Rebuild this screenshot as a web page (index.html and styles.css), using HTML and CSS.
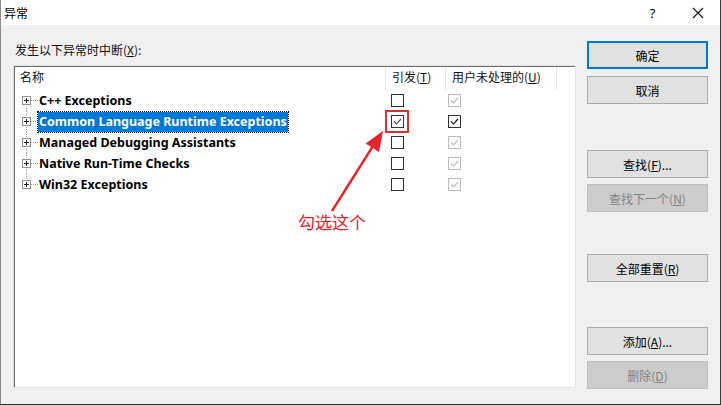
FILE: index.html
```html
<!DOCTYPE html>
<html lang="zh-CN">
<head>
<meta charset="utf-8">
<title>异常</title>
<link rel="stylesheet" href="styles.css">
</head>
<body>
<div class="window">
  <div class="titlebar">
    <span class="title">异常</span>
    <span class="tb-help">?</span>
    <span class="tb-close"><svg width="12" height="12" viewBox="0 0 12 12"><path d="M1 1L11 11M11 1L1 11" stroke="#111" stroke-width="1.1" fill="none"/></svg></span>
  </div>
  <div class="content">
    <div class="left">
      <div class="label">发生以下异常时中断(<u>X</u>):</div>
      <div class="listbox">
        <div class="header">
          <div class="hcol c-name">名称</div>
          <div class="hcol c-throw">引发(<u>T</u>)</div>
          <div class="hcol c-user">用户未处理的(<u>U</u>)</div>
        </div>
        <div class="row first">
          <div class="c-name cell"><span class="tree"><span class="exp"></span><span class="dash"></span></span><span class="name">C++ Exceptions</span></div>
          <div class="c-throw cell"><span class="cb"></span></div>
          <div class="c-user cell"><span class="cb dis"><svg viewBox="0 0 11 11"><path d="M2 5.5L4.5 8L9 3" /></svg></span></div>
        </div>
        <div class="row">
          <div class="c-name cell"><span class="tree"><span class="exp"></span><span class="dash"></span></span><span class="name sel">Common Language Runtime Exceptions</span></div>
          <div class="c-throw cell"><span class="cb on"><svg viewBox="0 0 11 11"><path d="M2 5.5L4.5 8L9 3" /></svg></span></div>
          <div class="c-user cell"><span class="cb on dark"><svg viewBox="0 0 11 11"><path d="M2 5.5L4.5 8L9 3" /></svg></span></div>
        </div>
        <div class="row">
          <div class="c-name cell"><span class="tree"><span class="exp"></span><span class="dash"></span></span><span class="name">Managed Debugging Assistants</span></div>
          <div class="c-throw cell"><span class="cb"></span></div>
          <div class="c-user cell"><span class="cb dis"><svg viewBox="0 0 11 11"><path d="M2 5.5L4.5 8L9 3" /></svg></span></div>
        </div>
        <div class="row">
          <div class="c-name cell"><span class="tree"><span class="exp"></span><span class="dash"></span></span><span class="name">Native Run-Time Checks</span></div>
          <div class="c-throw cell"><span class="cb"></span></div>
          <div class="c-user cell"><span class="cb dis"><svg viewBox="0 0 11 11"><path d="M2 5.5L4.5 8L9 3" /></svg></span></div>
        </div>
        <div class="row last">
          <div class="c-name cell"><span class="tree"><span class="exp"></span><span class="dash"></span></span><span class="name">Win32 Exceptions</span></div>
          <div class="c-throw cell"><span class="cb"></span></div>
          <div class="c-user cell"><span class="cb dis"><svg viewBox="0 0 11 11"><path d="M2 5.5L4.5 8L9 3" /></svg></span></div>
        </div>
      </div>
    </div>
    <div class="buttons">
      <div class="btn default">确定</div>
      <div class="btn b-cancel">取消</div>
      <div class="btn b-find">查找(<u>F</u>)...</div>
      <div class="btn disabled b-next">查找下一个(<u>N</u>)</div>
      <div class="btn b-reset">全部重置(<u>R</u>)</div>
      <div class="btn b-add">添加(<u>A</u>)...</div>
      <div class="btn disabled b-del">删除(<u>D</u>)</div>
    </div>
  </div>

  <div class="redbox"></div>
  <svg class="arrow" width="721" height="405" viewBox="0 0 721 405">
    <line x1="332" y1="211" x2="373" y2="146" stroke="#e8242b" stroke-width="2.4"/>
    <polygon points="383,131 379,152 365.6,143.6" fill="#e8242b"/>
  </svg>
  <div class="note">勾选这个</div>
</div>
</body>
</html>
```

FILE: styles.css
```css
* { box-sizing: border-box; }
html, body { margin: 0; padding: 0; }
body {
  width: 721px;
  height: 405px;
  overflow: hidden;
  font-family: "Noto Sans CJK SC", "Noto Sans", sans-serif;
  font-size: 12px;
  color: #000;
}
u { text-decoration: underline; text-underline-offset: 1px; }

.window {
  position: relative;
  width: 721px;
  height: 405px;
  background: #f0f0f0;
  border-left: 1px solid #8c8c8c;
  border-right: 1px solid #3a3a3a;
  border-bottom: 1px solid #2c2c2c;
  display: flex;
  flex-direction: column;
}

.titlebar {
  height: 25px;
  background: #fff;
  display: flex;
  align-items: center;
  padding-left: 3px;
}
.title { flex: 1; font-size: 12px; line-height: 16px; }
.tb-help { width: 45px; text-align: center; font-family: "Noto Sans", sans-serif; font-size: 13px; }
.tb-close { width: 45px; height: 25px; display: flex; align-items: center; justify-content: center; }

.content {
  display: flex;
  padding: 16px 0 0 12px;
  flex: 1;
}
.left { width: 563px; margin-right: 11px; display: flex; flex-direction: column; }
.label { height: 24px; line-height: 18px; padding-left: 2px; color: #111; }

.listbox {
  height: 323px;
  background: #fff;
  border-top: 1px solid #a0a0a0;
  border-left: 1px solid #a0a0a0;
  border-right: 1px solid #fff;
  border-bottom: 1px solid #fff;
  box-shadow: inset 1px 1px 0 #696969;
  outline: 1px solid #e3e3e3;
  outline-offset: -1px;
  padding: 1px 0 0 1px;
}

.header { display: flex; height: 23px; }
.hcol { height: 23px; line-height: 20px; padding-left: 6px; border-right: 1px solid #e5e5e5; color: #111; }
.c-name { width: 370px; }
.c-throw { width: 61px; }
.c-user { width: 111px; }
.header .c-name { padding-left: 5px; border-right: none; }
.header .c-throw { border-left: 1px solid #e5e5e5; }

.row { display: flex; height: 21px; }
.cell { height: 21px; display: flex; align-items: center; }
.row .c-name { padding-left: 7px; }
.tree { position: relative; display: flex; align-items: center; width: 16px; height: 21px; }
.tree::before {
  content: "";
  position: absolute;
  left: 4px;
  top: 0;
  bottom: 0;
  border-left: 1px dotted #a0a0a0;
}
.row.first .tree::before { top: 10px; }
.row.last .tree::before { bottom: 10px; }
.exp {
  position: relative;
  z-index: 1;
  width: 9px;
  height: 9px;
  border: 1px solid #919191;
  background: #fff;
}
.exp::before { content: ""; position: absolute; left: 1px; top: 3px; width: 5px; height: 1px; background: #222; }
.exp::after { content: ""; position: absolute; left: 3px; top: 1px; width: 1px; height: 5px; background: #222; }
.dash { width: 7px; border-top: 1px dotted #a0a0a0; }

.name {
  font-family: "Noto Sans", sans-serif;
  font-weight: bold;
  font-size: 12.5px;
  line-height: 19px;
  padding: 0 1px;
  color: #000;
}
.name.sel {
  background: #0078d7;
  color: #fff;
  outline: 1px dotted #000;
  outline-offset: 0;
  height: 20px;
  line-height: 20px;
}

.row .c-throw { padding-left: 6px; }
.row .c-user { padding-left: 2px; }
.cb {
  width: 13px;
  height: 13px;
  border: 1px solid #333;
  background: #fff;
  display: flex;
  align-items: center;
  justify-content: center;
}
.cb svg { width: 11px; height: 11px; }
.cb svg path { fill: none; stroke: #555; stroke-width: 1.2; }
.cb.dark svg path { stroke: #222; }
.cb.dis { border-color: #bcbcbc; }
.cb.dis svg path { stroke: #bcbcbc; }

.buttons { width: 121px; display: flex; flex-direction: column; }
.btn {
  height: 28px;
  border: 1px solid #adadad;
  background: #e1e1e1;
  display: flex;
  align-items: center;
  justify-content: center;
  color: #000;
}
.btn.default { border: 2px solid #0078d7; }
.btn.disabled { background: #cccccc; border-color: #bfbfbf; color: #838383; }
.b-cancel { margin-top: 7px; }
.b-find { margin-top: 46px; }
.b-next { margin-top: 6px; }
.b-reset { margin-top: 42px; }
.b-add { margin-top: 45px; }
.b-del { margin-top: 6px; }

.redbox {
  position: absolute;
  left: 384px;
  top: 110px;
  width: 24px;
  height: 23px;
  border: 2px solid #e52d2d;
}
.arrow { position: absolute; left: -1px; top: 0; pointer-events: none; }
.note {
  position: absolute;
  left: 297px;
  top: 211px;
  font-size: 17px;
  line-height: 22px;
  color: #e8242b;
}
```
